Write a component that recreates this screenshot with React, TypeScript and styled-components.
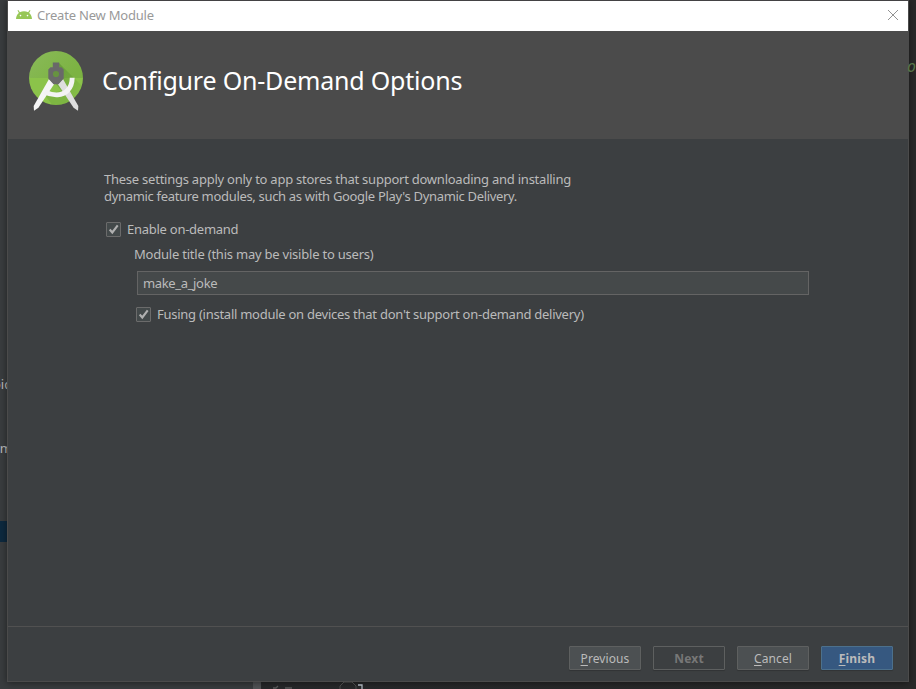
import React, { useState } from 'react';
import styled, { createGlobalStyle } from 'styled-components';

const GlobalStyle = createGlobalStyle`
  *, *::before, *::after { box-sizing: border-box; }
  html, body { margin: 0; padding: 0; background: #2b2b2b; }
  body { font-family: "Noto Sans", "Open Sans", sans-serif; font-size: 13px; overflow: hidden; }
  svg { display: block; flex: none; }
`;

const Desktop = styled.main`
  position: relative;
  width: 916px;
  height: 689px;
  overflow: hidden;
  background: linear-gradient(90deg, #393c3e 0 254px, #27282a 262px, #292929 100%);
`;

const Backdrop = styled.span<{ $x: number; $y: number; $w: number; $h: number; $bg?: string }>`
  position: absolute;
  left: ${(p) => p.$x}px;
  top: ${(p) => p.$y}px;
  width: ${(p) => p.$w}px;
  height: ${(p) => p.$h}px;
  background: ${(p) => p.$bg ?? 'transparent'};
  color: #bbbbbb;
  line-height: 16px;
  white-space: nowrap;
`;

const EditorGlyph = styled(Backdrop)`
  color: #57764a;
  font: italic 15px/16px "DejaVu Sans Mono", monospace;
`;

const Dialog = styled.section`
  position: absolute;
  left: 7px;
  top: 0;
  width: 902px;
  height: 682px;
  display: flex;
  flex-direction: column;
  background: #3c3f41;
  border: 1px solid #4b4b4b;
  border-top-color: #434244;
  box-shadow: 0 1px 7px rgba(0, 0, 0, 0.45);
`;

const TitleBar = styled.header`
  height: 30px;
  flex: none;
  display: flex;
  align-items: center;
  padding: 0 9px 2px 8px;
  background: #fff;
  color: #999;
`;

const WindowTitle = styled.span`
  margin-left: 5px;
  flex: 1;
  line-height: 18px;
  letter-spacing: -0.2px;
`;

const CloseButton = styled.button`
  display: flex;
  padding: 0;
  border: 0;
  background: none;
`;

const Banner = styled.div`
  height: 108px;
  flex: none;
  display: flex;
  align-items: flex-start;
  padding: 19px 0 0 20px;
  background: #4b4b4b;
`;

const Heading = styled.h1`
  margin: 13px 0 0 18px;
  color: #fff;
  font-size: 25px;
  font-weight: 400;
  line-height: 34px;
  letter-spacing: -0.2px;
  white-space: nowrap;
`;

const Content = styled.div`
  flex: 1;
  padding: 32px 0 0 96px;
  color: #bbbbbb;
  letter-spacing: -0.26px;
`;

const Description = styled.p`
  margin: 0;
  line-height: 17px;
  white-space: pre;
`;

const DescriptionLine = styled.span<{ $tracking: number }>`
  display: block;
  letter-spacing: ${(p) => p.$tracking}px;
`;

const CheckRow = styled.label<{ $top: number; $indent: number }>`
  display: flex;
  align-items: center;
  height: 18px;
  margin: ${(p) => p.$top}px 0 0 ${(p) => p.$indent}px;
  gap: 6px;
  white-space: nowrap;
`;

const CheckInput = styled.input`
  position: absolute;
  opacity: 0;
  width: 0;
  height: 0;
  margin: 0;
`;

const CheckFace = styled.span`
  width: 15px;
  height: 15px;
  flex: none;
  display: flex;
  border: 1px solid #6b6b6b;
  border-radius: 1px;
  background: #43494a;
`;

const FieldLabel = styled.label`
  display: block;
  margin: 7px 0 0 30px;
  line-height: 18px;
  letter-spacing: -0.22px;
`;

const TextField = styled.input`
  display: block;
  width: 672px;
  height: 24px;
  margin: 8px 0 0 33px;
  padding: 0 5px 1px;
  border: 1px solid #646464;
  background: #45494a;
  color: #bbbbbb;
  font: inherit;
  letter-spacing: -0.35px;
  outline: none;
`;

const Footer = styled.footer`
  height: 55px;
  flex: none;
  display: flex;
  justify-content: flex-end;
  align-items: flex-start;
  gap: 12px;
  padding: 19px 15px 0 0;
  border-top: 1px solid #515151;
`;

const looks = {
  normal: { bg: '#4c5052', line: '#5e6060', ink: '#bbbbbb', weight: 400 },
  disabled: { bg: '#3c3f41', line: '#5e6060', ink: '#777777', weight: 700 },
  primary: { bg: '#365880', line: '#4c708c', ink: '#bbbbbb', weight: 700 },
};

const Button = styled.button<{ $look: keyof typeof looks }>`
  width: 72px;
  height: 24px;
  padding: 2px 0 0 0;
  border: 1px solid ${(p) => looks[p.$look].line};
  border-radius: 1px;
  background: ${(p) => looks[p.$look].bg};
  color: ${(p) => looks[p.$look].ink};
  font-family: inherit;
  font-size: 12px;
  font-weight: ${(p) => looks[p.$look].weight};
  letter-spacing: ${(p) => (p.$look === 'normal' ? 0.1 : 0.2)}px;
  line-height: 20px;
  box-shadow: 0 1px 1px rgba(0, 0, 0, 0.18);
`;

const Mnemonic = styled.span`
  text-decoration: underline;
  text-decoration-thickness: 1px;
  text-underline-offset: 2px;
`;

const AndroidIcon = () => (
  <svg width="16" height="10" viewBox="0 0 16 10">
    <path d="M0 9C0.2 6 1.2 4.2 2.9 2.9L1.5 0.6 2.3 0.1 3.9 2.2C6.5 0.9 9.5 0.9 12.1 2.2L13.7 0.1 14.5 0.6 13.1 2.9C14.8 4.2 15.8 6 16 9Z" fill="#97c756" />
    <circle cx="4.5" cy="5.6" r="0.8" fill="#fff" />
    <circle cx="11.5" cy="5.6" r="0.8" fill="#fff" />
  </svg>
);

const StudioLogo = () => (
  <svg width="56" height="62" viewBox="0 0 56 62">
    <defs>
      <clipPath id="disc"><circle cx="28" cy="28" r="27" /></clipPath>
      <linearGradient id="shade" x1="0" y1="0" x2="1" y2="1">
        <stop offset="0" stopColor="#558b2f" stopOpacity="0.65" />
        <stop offset="1" stopColor="#689f38" stopOpacity="0" />
      </linearGradient>
      <linearGradient id="sky" x1="0" y1="0" x2="1" y2="0.5">
        <stop offset="0" stopColor="#8aba5a" />
        <stop offset="1" stopColor="#7cb342" />
      </linearGradient>
    </defs>
    <g clipPath="url(#disc)">
      <path d="M0 0H56V28H0Z" fill="url(#sky)" />
      <path d="M0 28H56V56H0Z" fill="#8bc34a" />
      <path d="M31 13L56 38V56H46L27 33Z" fill="url(#shade)" />
      <path d="M17 45L25 56H53L40 39Z" fill="#689f38" opacity="0.4" />
    </g>
    <path d="M29.8 34L35 29L50.3 56L50 60.8L45.6 57.8Z" fill="#dedede" />
    <path d="M26.2 34L21 29L5.7 56L6 60.8L10.4 57.8Z" fill="#f5f5f5" />
    <path d="M16.5 42C26 46.2 34.5 45.5 39.5 40.5C43 37 44.2 32.5 44.2 27.8" fill="none" stroke="#f3f3f3" strokeWidth="4.9" />
    <circle cx="28" cy="24" r="4" fill="#679340" />
    <path fillRule="evenodd" d="M24.8 12.5H31.2V17.3H33.5L35.7 19.5V28.5L30.5 34.2H25.5L20.3 28.5V19.5L22.5 17.3H24.8ZM28 20.9A3.1 3.1 0 1 0 28 27.1A3.1 3.1 0 1 0 28 20.9Z" fill="#696969" />
  </svg>
);

const CheckBox = ({ top, indent, children }: { top: number; indent: number; children: React.ReactNode }) => {
  const [on, setOn] = useState(true);
  return (
    <CheckRow $top={top} $indent={indent}>
      <CheckInput type="checkbox" checked={on} onChange={() => setOn(!on)} />
      <CheckFace>
        {on && (
          <svg width="13" height="13" viewBox="0 0 13 13">
            <path d="M2.7 6.5L5.3 9.5L10.7 2.3" fill="none" stroke="#b0b0b0" strokeWidth="2.1" />
          </svg>
        )}
      </CheckFace>
      <span>{children}</span>
    </CheckRow>
  );
};

export default function App() {
  const [title, setTitle] = useState('make_a_joke');
  return (
    <>
      <GlobalStyle />
      <Desktop>
        <Backdrop $x={-7} $y={376} $w={24} $h={16}>oid</Backdrop>
        <Backdrop $x={-5} $y={440} $w={20} $h={16}>tm</Backdrop>
        <Backdrop $x={0} $y={521} $w={7} $h={21} $bg="#0d293e" />
        <Backdrop $x={253} $y={681} $w={8} $h={8} $bg="#515355" />
        <Dialog>
          <TitleBar>
            <AndroidIcon />
            <WindowTitle>Create New Module</WindowTitle>
            <CloseButton aria-label="Close">
              <svg width="12" height="12" viewBox="0 0 12 12">
                <path d="M1 1L11 11M11 1L1 11" stroke="#929292" strokeWidth="1" />
              </svg>
            </CloseButton>
          </TitleBar>
          <Banner>
            <StudioLogo />
            <Heading>Configure On-Demand Options</Heading>
          </Banner>
          <Content>
            <Description>
              <DescriptionLine $tracking={-0.24}>These settings apply only to app stores that support downloading and installing</DescriptionLine>
              <DescriptionLine $tracking={-0.32}>dynamic feature modules, such as with Google Play's Dynamic Delivery.</DescriptionLine>
            </Description>
            <CheckBox top={15} indent={2}>Enable on-demand</CheckBox>
            <FieldLabel htmlFor="module-title">Module title (this may be visible to users)</FieldLabel>
            <TextField id="module-title" value={title} onChange={(e) => setTitle(e.target.value)} />
            <CheckBox top={10} indent={32}>Fusing (install module on devices that don't support on-demand delivery)</CheckBox>
          </Content>
          <Footer>
            <Button $look="normal"><Mnemonic>P</Mnemonic>revious</Button>
            <Button $look="disabled" disabled>Next</Button>
            <Button $look="normal"><Mnemonic>C</Mnemonic>ancel</Button>
            <Button $look="primary"><Mnemonic>F</Mnemonic>inish</Button>
          </Footer>
        </Dialog>
        <Backdrop $x={272} $y={682} $w={100} $h={7}>
          <svg width="100" height="7" viewBox="0 0 100 7">
            <path d="M1 6H4L6 4M13 6H20" stroke="#555" strokeWidth="1.3" fill="none" />
            <path d="M68 7V4L72 0H80L84 4V7" stroke="#484848" fill="none" />
            <path d="M86 3H90V7" stroke="#a8b0b8" strokeWidth="1.3" fill="none" />
          </svg>
        </Backdrop>
        <EditorGlyph $x={907} $y={59} $w={9} $h={16}>o</EditorGlyph>
      </Desktop>
    </>
  );
}
